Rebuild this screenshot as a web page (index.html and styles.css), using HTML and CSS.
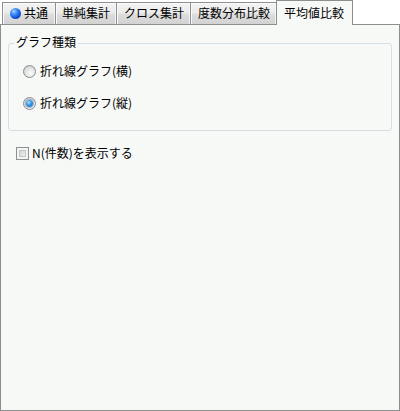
FILE: index.html
```html
<!DOCTYPE html>
<html lang="ja">
<head>
<meta charset="utf-8">
<title>平均値比較</title>
<link rel="stylesheet" href="styles.css">
</head>
<body>
<div class="window">
  <div class="tabs">
    <div class="tab first"><span class="dot"></span>共通</div>
    <div class="tab narrow">単純集計</div>
    <div class="tab">クロス集計</div>
    <div class="tab">度数分布比較</div>
    <div class="tab active">平均値比較</div>
  </div>
  <div class="panel">
    <fieldset class="group">
      <legend>グラフ種類</legend>
      <div class="opt"><span class="radio"></span>折れ線グラフ(横)</div>
      <div class="opt second"><span class="radio checked"></span>折れ線グラフ(縦)</div>
    </fieldset>
    <div class="check"><span class="box"></span>N(件数)を表示する</div>
  </div>
</div>
</body>
</html>
```

FILE: styles.css
```css
* { box-sizing: border-box; }
html, body { margin: 0; padding: 0; background: #ffffff; }
body {
  font-family: "Noto Sans CJK JP", "Noto Sans", sans-serif;
  font-size: 12px;
  color: #000;
}
.window {
  width: 400px;
  height: 411px;
  display: flex;
  flex-direction: column;
}
.tabs {
  display: flex;
  align-items: flex-end;
  height: 24px;
  padding-left: 2px;
  flex: none;
}
.tab {
  height: 22px;
  display: flex;
  align-items: center;
  border: 1px solid #8d8e90;
  border-bottom: none;
  margin-right: -1px;
  padding: 0 6px 1px 7px;
  line-height: 14px;
  white-space: nowrap;
  background: linear-gradient(#f3f3f3 0%, #ebebeb 48%, #dedede 52%, #d2d2d2 100%);
  box-shadow: inset 1px 1px 0 #fbfbfb, inset -1px 0 0 #f4f4f4;
}
.tab.first { padding: 0 7px 1px 7px; }
.tab.narrow { padding: 0 6px 1px 6px; }
.tab.active {
  height: 25px;
  margin-bottom: -1px;
  padding: 0 8px 1px 7px;
  background: #f7f9f7;
  box-shadow: none;
  position: relative;
  z-index: 1;
}
.dot {
  width: 11px;
  height: 11px;
  border-radius: 50%;
  margin-right: 3px;
  background: radial-gradient(circle at 35% 30%, #a9d2ff 0%, #3f8ef5 30%, #0d4fd8 65%, #082e8e 100%);
}
.panel {
  flex: 1;
  border: 1px solid #8d8e90;
  background: #f7f9f7;
  display: flex;
  flex-direction: column;
  align-items: flex-start;
}
.group {
  align-self: stretch;
  margin: 10px 7px 0 7px;
  padding: 0 0 17px 0;
  border: 1px solid #d5dfe6;
  border-radius: 3px;
  min-width: 0;
}
.group legend {
  margin-left: 5px;
  padding: 0 2px 3px 2px;
  line-height: 14px;
}
.opt {
  display: flex;
  align-items: center;
  height: 20px;
  margin: 9px 0 0 14px;
  line-height: 14px;
}
.opt.second { margin-top: 12px; }
.radio {
  width: 13px;
  height: 13px;
  border-radius: 50%;
  margin-right: 4px;
  border: 1px solid #8a8c8e;
  background: radial-gradient(circle at 60% 65%, #fbfbfb 0%, #e6e6e6 45%, #c4c4c4 100%);
  display: flex;
  align-items: center;
  justify-content: center;
}
.radio.checked::after {
  content: "";
  width: 7px;
  height: 7px;
  border-radius: 50%;
  background: radial-gradient(circle at 40% 35%, #aee0ff 0%, #3c9be8 40%, #1a5fae 100%);
  box-shadow: 0 0 0 1px rgba(40, 90, 150, 0.35);
}
.check {
  display: flex;
  align-items: center;
  height: 20px;
  margin: 12px 0 0 15px;
  line-height: 14px;
}
.box {
  width: 13px;
  height: 13px;
  margin-right: 3px;
  border: 1px solid #8e8f8f;
  background: #f4f4f4;
  padding: 2px;
  display: flex;
}
.box::after {
  content: "";
  flex: 1;
  background: linear-gradient(135deg, #cfd2d6 0%, #e4e6e8 60%, #f2f2f2 100%);
  border: 1px solid #c2c4c6;
}
```
